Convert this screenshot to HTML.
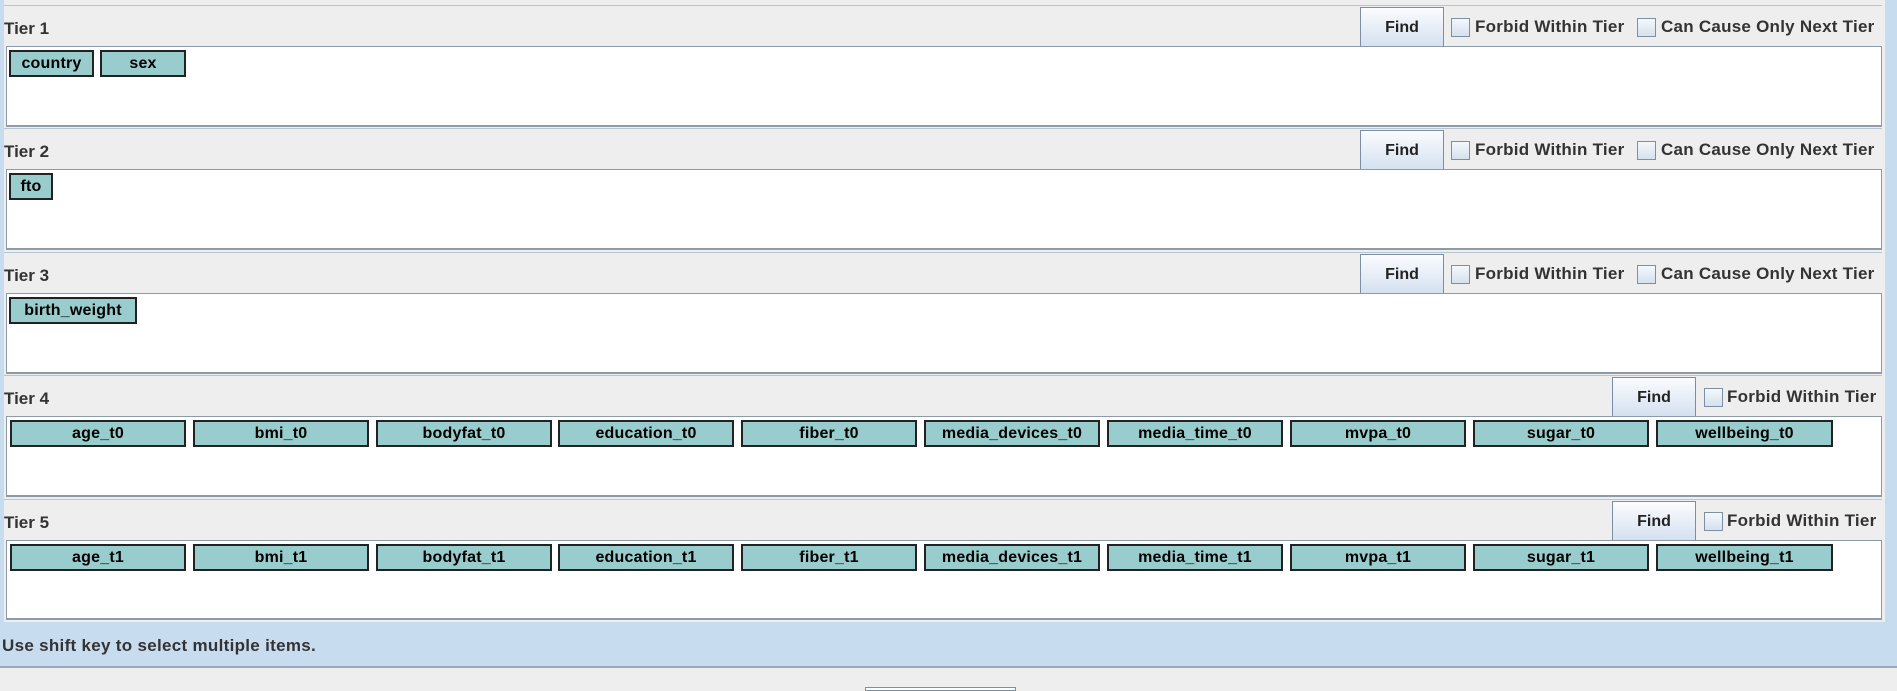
<!DOCTYPE html>
<html><head><meta charset="utf-8"><style>
*{margin:0;padding:0;box-sizing:border-box}
body{width:1897px;height:689px;background:#eeeeee;position:relative;overflow:hidden;font-family:"Liberation Sans",Arial,sans-serif;font-weight:bold;font-size:16px;color:#333}
.a{position:absolute}
.hdr{position:absolute;left:4px;width:1878px;height:41px;background:#eeeeee;border-top:1px solid #b8c4d0}
.lbl{position:absolute;left:0;top:13px;font-size:17px;letter-spacing:0px}
.box{position:absolute;left:6px;width:1876px;height:81px;background:#fff;border:1px solid #8d9aa8;border-bottom:2px solid #8d9aa8}
.chip{position:absolute;height:27px;background:#99cccc;border:2px solid #222;color:#000;text-align:center;line-height:24px;font-size:16px;letter-spacing:0.2px}
.find{position:absolute;width:84px;height:40px;border:1px solid #7a8ea6;background:linear-gradient(#fbfcfe,#d4e1f0);text-align:center;line-height:40px;color:#222;font-size:16px}
.cb{position:absolute;width:19px;height:19px;border:1px solid #7d8fa3;background:linear-gradient(#f4f8fc,#d5e1ee)}
.ct{position:absolute;font-size:17px;letter-spacing:0.25px;white-space:nowrap;margin-top:0px}
</style></head><body>
<div class="a" style="left:0;top:0;width:4px;height:622px;background:#c8dcf0"></div>
<div class="a" style="left:1885px;top:0;width:12px;height:668px;background:#c8dcf0"></div>
<div class="a" style="left:0;top:622px;width:1897px;height:46px;background:#c8dcf0;border-bottom:2px solid #9aaabb"></div>
<div class="a" style="left:2px;top:636px;font-size:17px;letter-spacing:0.3px">Use shift key to select multiple items.</div>
<div class="a" style="left:865px;top:687px;width:151px;height:4px;border:1px solid #7a8ea6;background:#fff"></div>

<!-- Tier 1 -->
<div class="hdr" style="top:5px"><div class="lbl">Tier 1</div></div>
<div class="find" style="left:1360px;top:7px">Find</div>
<div class="cb" style="left:1451px;top:18px"></div><div class="ct" style="left:1475px;top:17px">Forbid Within Tier</div>
<div class="cb" style="left:1637px;top:18px"></div><div class="ct" style="left:1661px;top:17px">Can Cause Only Next Tier</div>
<div class="box" style="top:46px"></div>
<div class="chip" style="left:9px;top:50px;width:85px">country</div>
<div class="chip" style="left:100px;top:50px;width:86px">sex</div>

<!-- Tier 2 -->
<div class="hdr" style="top:128px"><div class="lbl">Tier 2</div></div>
<div class="find" style="left:1360px;top:130px">Find</div>
<div class="cb" style="left:1451px;top:141px"></div><div class="ct" style="left:1475px;top:140px">Forbid Within Tier</div>
<div class="cb" style="left:1637px;top:141px"></div><div class="ct" style="left:1661px;top:140px">Can Cause Only Next Tier</div>
<div class="box" style="top:169px"></div>
<div class="chip" style="left:9px;top:173px;width:44px">fto</div>

<!-- Tier 3 -->
<div class="hdr" style="top:252px"><div class="lbl">Tier 3</div></div>
<div class="find" style="left:1360px;top:254px">Find</div>
<div class="cb" style="left:1451px;top:265px"></div><div class="ct" style="left:1475px;top:264px">Forbid Within Tier</div>
<div class="cb" style="left:1637px;top:265px"></div><div class="ct" style="left:1661px;top:264px">Can Cause Only Next Tier</div>
<div class="box" style="top:293px"></div>
<div class="chip" style="left:9px;top:297px;width:128px">birth_weight</div>

<!-- Tier 4 -->
<div class="hdr" style="top:375px"><div class="lbl">Tier 4</div></div>
<div class="find" style="left:1612px;top:377px">Find</div>
<div class="cb" style="left:1704px;top:388px"></div><div class="ct" style="left:1727px;top:387px">Forbid Within Tier</div>
<div class="box" style="top:416px"></div>
<div class="chip" style="left:10px;top:420px;width:176px">age_t0</div>
<div class="chip" style="left:193px;top:420px;width:176px">bmi_t0</div>
<div class="chip" style="left:376px;top:420px;width:176px">bodyfat_t0</div>
<div class="chip" style="left:558px;top:420px;width:176px">education_t0</div>
<div class="chip" style="left:741px;top:420px;width:176px">fiber_t0</div>
<div class="chip" style="left:924px;top:420px;width:176px">media_devices_t0</div>
<div class="chip" style="left:1107px;top:420px;width:176px">media_time_t0</div>
<div class="chip" style="left:1290px;top:420px;width:176px">mvpa_t0</div>
<div class="chip" style="left:1473px;top:420px;width:176px">sugar_t0</div>
<div class="chip" style="left:1656px;top:420px;width:177px">wellbeing_t0</div>

<!-- Tier 5 -->
<div class="hdr" style="top:499px"><div class="lbl">Tier 5</div></div>
<div class="find" style="left:1612px;top:501px">Find</div>
<div class="cb" style="left:1704px;top:512px"></div><div class="ct" style="left:1727px;top:511px">Forbid Within Tier</div>
<div class="box" style="top:540px;height:80px"></div>
<div class="chip" style="left:10px;top:544px;width:176px">age_t1</div>
<div class="chip" style="left:193px;top:544px;width:176px">bmi_t1</div>
<div class="chip" style="left:376px;top:544px;width:176px">bodyfat_t1</div>
<div class="chip" style="left:558px;top:544px;width:176px">education_t1</div>
<div class="chip" style="left:741px;top:544px;width:176px">fiber_t1</div>
<div class="chip" style="left:924px;top:544px;width:176px">media_devices_t1</div>
<div class="chip" style="left:1107px;top:544px;width:176px">media_time_t1</div>
<div class="chip" style="left:1290px;top:544px;width:176px">mvpa_t1</div>
<div class="chip" style="left:1473px;top:544px;width:176px">sugar_t1</div>
<div class="chip" style="left:1656px;top:544px;width:177px">wellbeing_t1</div>
</body></html>
